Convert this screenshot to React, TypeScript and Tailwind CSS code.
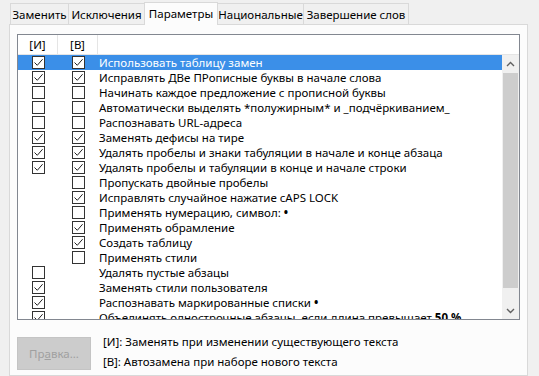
import clsx from "clsx";

const cn = clsx;

type Row = { label: React.ReactNode; m: boolean | null; t: boolean | null };

const rows: Row[] = [
  { label: "Использовать таблицу замен", m: true, t: true },
  { label: "Исправлять ДВе ПРописные буквы в начале слова", m: true, t: true },
  { label: "Начинать каждое предложение с прописной буквы", m: false, t: false },
  { label: "Автоматически выделять *полужирным* и _подчёркиванием_", m: false, t: false },
  { label: "Распознавать URL-адреса", m: false, t: false },
  { label: "Заменять дефисы на тире", m: true, t: true },
  { label: "Удалять пробелы и знаки табуляции в начале и конце абзаца", m: true, t: true },
  { label: "Удалять пробелы и табуляции в конце и начале строки", m: true, t: true },
  { label: "Пропускать двойные пробелы", m: null, t: false },
  { label: "Исправлять случайное нажатие cAPS LOCK", m: null, t: true },
  {
    label: (
      <>
        Применять нумерацию, символ: <b>•</b>
      </>
    ),
    m: null,
    t: false,
  },
  { label: "Применять обрамление", m: null, t: true },
  { label: "Создать таблицу", m: null, t: true },
  { label: "Применять стили", m: null, t: false },
  { label: "Удалять пустые абзацы", m: false, t: null },
  { label: "Заменять стили пользователя", m: true, t: null },
  {
    label: (
      <>
        Распознавать маркированные списки <b>•</b>
      </>
    ),
    m: true,
    t: null,
  },
  {
    label: (
      <>
        Объединять однострочные абзацы, если длина превышает <b>50 %</b>
      </>
    ),
    m: true,
    t: null,
  },
];

const tabs = [
  { name: "Заменить", w: "w-[59px]" },
  { name: "Исключения", w: "w-[77px]" },
  { name: "Параметры", w: "w-[74px]", active: true },
  { name: "Национальные", w: "w-[87px]" },
  { name: "Завершение слов", w: "w-[106px]" },
];

function Check({ on }: { on: boolean | null }) {
  if (on === null) return <span className="w-[13px] h-[13px]" />;
  return (
    <span className="w-[13px] h-[13px] border border-[#333] bg-white flex items-center justify-center">
      {on && (
        <svg width="11" height="11" viewBox="0 0 11 11" fill="none">
          <path d="M1.5 5.5 L4.3 8.3 L9.6 2.2" stroke="#222" strokeWidth="1" />
        </svg>
      )}
    </span>
  );
}

function Chevron({ up }: { up?: boolean }) {
  return (
    <svg width="9" height="6" viewBox="0 0 9 6" fill="none">
      <path
        d={up ? "M1 5 L4.5 1.5 L8 5" : "M1 1 L4.5 4.5 L8 1"}
        stroke="#606060"
        strokeWidth="1.4"
      />
    </svg>
  );
}

export default function App() {
  return (
    <div
      className="w-[539px] h-[376px] overflow-hidden bg-[#f0f0f0] text-[11.5px] text-black"
      style={{ fontFamily: '"Noto Sans", "Open Sans", sans-serif' }}
    >
      {/* Tabs */}
      <div className="flex items-end pl-[10px] pt-[1px] h-[24px]">
        {tabs.map((t, i) => (
          <div
            key={t.name}
            className={cn(
              "flex justify-center border border-[#d9d9d9] border-b-0 whitespace-nowrap",
              t.w,
              i > 0 && "-ml-px",
              t.active
                ? "h-[23px] pt-[2px] bg-[#fcfcfc] relative z-10 -mb-px"
                : "h-[21px] pt-[2px] bg-[#f0f0f0]"
            )}
          >
            {t.name}
          </div>
        ))}
      </div>

      {/* Panel */}
      <div className="w-[519px] ml-[9px] h-[352px] border border-[#d9d9d9] bg-[#fcfcfc] pt-[9px] px-[7px]">
        <div className="w-[503px] h-[286px] border border-[#828790] bg-white flex flex-col">
          {/* Header */}
          <div className="flex h-[20px] border-b border-[#e5e5e5] shrink-0">
            <div className="w-[40px] border-r border-[#e5e5e5] flex items-center justify-center">
              [И]
            </div>
            <div className="w-[40px] border-r border-[#e5e5e5] flex items-center justify-center">
              [В]
            </div>
            <div className="flex-1" />
          </div>

          <div className="flex flex-1 min-h-0">
            {/* Rows */}
            <div className="flex-1 overflow-hidden">
              {rows.map((r, i) => (
                <div
                  key={i}
                  className={cn(
                    "flex items-center h-[15px] whitespace-nowrap",
                    i === 0 && "bg-[#3b8fe8] text-white"
                  )}
                >
                  <div className="w-[40px] flex justify-center pl-[1px]">
                    <Check on={r.m} />
                  </div>
                  <div className="w-[40px] flex justify-center pl-[1px]">
                    <Check on={r.t} />
                  </div>
                  <div className="pl-[1px]">{r.label}</div>
                </div>
              ))}
            </div>

            {/* Scrollbar */}
            <div className="w-[17px] bg-[#f0f0f0] flex flex-col items-center">
              <div className="h-[17px] w-full flex items-center justify-center">
                <Chevron up />
              </div>
              <div className="flex-1 w-[15px] py-[1px]">
                <div className="h-[215px] bg-[#cdcdcd]" />
              </div>
              <div className="h-[17px] w-full flex items-center justify-center">
                <Chevron />
              </div>
            </div>
          </div>
        </div>

        {/* Bottom */}
        <div className="flex items-start mt-[17px] gap-[12px]">
          <button
            disabled
            className="w-[74px] h-[33px] bg-[#cccccc] border border-[#c4c4c4] text-[#a0a0a0]"
          >
            Пр<u>а</u>вка...
          </button>
          <div className="flex flex-col gap-[4px] -mt-[3px] leading-[16px]">
            <div>[И]: Заменять при изменении существующего текста</div>
            <div>[В]: Автозамена при наборе нового текста</div>
          </div>
        </div>
      </div>
    </div>
  );
}
